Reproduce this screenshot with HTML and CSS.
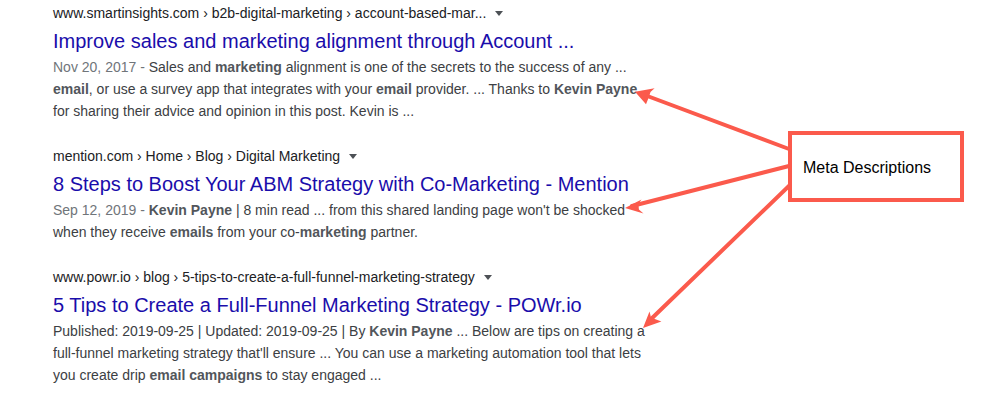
FILE: index.html
```html
<!DOCTYPE html>
<html>
<head>
<meta charset="utf-8">
<link rel="stylesheet" href="styles.css">
</head>
<body>
<div class="page">
  <div class="results">
    <div class="result">
      <div class="url">www.smartinsights.com › b2b-digital-marketing › account-based-mar... <span class="caret"></span></div>
      <div class="title">Improve sales and marketing alignment through Account ...</div>
      <div class="desc"><span class="date">Nov 20, 2017 - </span>Sales and <b>marketing</b> alignment is one of the secrets to the success of any ...<br><b>email</b>, or use a survey app that integrates with your <b>email</b> provider. ... Thanks to <b>Kevin Payne</b><br>for sharing their advice and opinion in this post. Kevin is ...</div>
    </div>
    <div class="result">
      <div class="url">mention.com › Home › Blog › Digital Marketing <span class="caret"></span></div>
      <div class="title">8 Steps to Boost Your ABM Strategy with Co-Marketing - Mention</div>
      <div class="desc"><span class="date">Sep 12, 2019 - </span><b>Kevin Payne</b> | 8 min read ... from this shared landing page won't be shocked<br>when they receive <b>emails</b> from your co-<b>marketing</b> partner.</div>
    </div>
    <div class="result">
      <div class="url">www.powr.io › blog › 5-tips-to-create-a-full-funnel-marketing-strategy <span class="caret"></span></div>
      <div class="title">5 Tips to Create a Full-Funnel Marketing Strategy - POWr.io</div>
      <div class="desc">Published: 2019-09-25 | Updated: 2019-09-25 | By <b>Kevin Payne</b> ... Below are tips on creating a<br>full-funnel marketing strategy that'll ensure ... You can use a marketing automation tool that lets<br>you create drip <b>email campaigns</b> to stay engaged ...</div>
    </div>
  </div>
  <div class="callout">Meta Descriptions</div>
  <svg class="arrows" width="999" height="402" viewBox="0 0 999 402">
    <g stroke="#fb5a4c" stroke-width="4" fill="none" stroke-linecap="round">
      <line x1="789" y1="149" x2="642" y2="94"/>
      <line x1="789" y1="166" x2="632" y2="206"/>
      <line x1="792" y1="183" x2="648" y2="322"/>
    </g>
    <g fill="#fb5a4c">
      <polygon points="635,91.7 654.6,88.3 650.5,91.9 648.8,97.2 646,104.3"/>
      <polygon points="625,208 641.5,199.5 638.4,204.0 638.9,209.6 643.5,213.4"/>
      <polygon points="643,328 649.5,311.5 650.9,316.9 655.5,319.3 661.4,321.5"/>
    </g>
  </svg>
</div>
</body>
</html>
```
FILE: styles.css
```css
html, body {
  margin: 0;
  padding: 0;
  background: #ffffff;
}
.page {
  position: relative;
  width: 999px;
  height: 402px;
  overflow: hidden;
  font-family: Arial, "Liberation Sans", sans-serif;
}
.results {
  display: flex;
  flex-direction: column;
  gap: 24px;
  padding: 3px 0 0 53px;
}
.result {
  display: flex;
  flex-direction: column;
}
.url {
  font-size: 14px;
  line-height: 20px;
  color: #202124;
  display: flex;
  align-items: center;
  white-space: nowrap;
}
.caret {
  display: inline-block;
  width: 0;
  height: 0;
  margin-left: 9px;
  border-left: 4px solid transparent;
  border-right: 4px solid transparent;
  border-top: 5px solid #4d5156;
}
.title {
  margin-top: 5px;
  font-size: 20px;
  line-height: 26px;
  color: #1a0dab;
  white-space: nowrap;
}
.desc {
  margin-top: 2px;
  font-size: 14px;
  line-height: 22px;
  color: #3c4043;
  white-space: nowrap;
}
.desc b {
  font-weight: bold;
  color: #52565b;
}
.date {
  color: #70757a;
}
.callout {
  position: absolute;
  left: 788px;
  top: 131px;
  width: 157px;
  height: 60px;
  padding-top: 3px;
  border: 4px solid #fb5a4c;
  background: #ffffff;
  box-sizing: content-box;
  display: flex;
  align-items: center;
  padding-left: 11px;
  font-size: 16px;
  color: #000000;
  z-index: 2;
}
.arrows {
  position: absolute;
  left: 0;
  top: 0;
  z-index: 1;
}
```
